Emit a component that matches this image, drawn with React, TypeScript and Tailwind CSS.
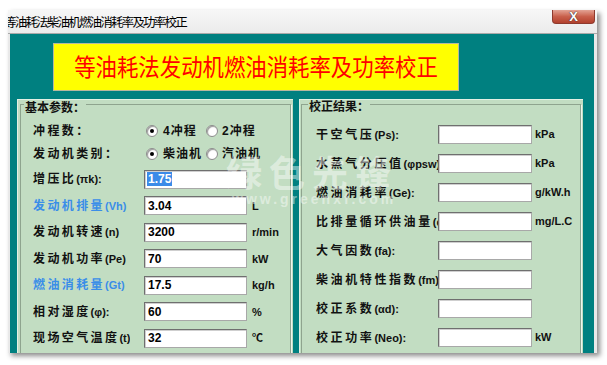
import React from "react";

const FONT = "font-['Liberation_Sans','Noto_Sans_CJK_SC',sans-serif]";

function Label({ cjk, latin, spacing }: { cjk: string; latin?: string; spacing: string }) {
  return (
    <>
      <span className={spacing}>{cjk}</span>
      {latin ? <span className="text-[11px] tracking-[0px]">{latin}</span> : null}
    </>
  );
}

function Input({ value, w, selected }: { value?: string; w: number; selected?: boolean }) {
  return (
    <div
      className="h-[19px] bg-white border border-t-[#6f6f6f] border-l-[#6f6f6f] border-b-[#a8a8a8] border-r-[#a8a8a8] shadow-[inset_1px_1px_0_#cfcfcf] flex items-center pl-[2px] text-[12px] font-bold text-black shrink-0"
      style={{ width: w }}
    >
      {value ? (
        selected ? (
          <span className="bg-[#3b8be8] text-white px-[1px] leading-[14px]">{value}</span>
        ) : (
          <span className="px-[1px]">{value}</span>
        )
      ) : null}
    </div>
  );
}

function Radio({ checked }: { checked?: boolean }) {
  return (
    <div className="w-[12px] h-[12px] rounded-full bg-white border border-[#8c8c8c] shadow-[inset_1px_1px_1px_#9a9a9a] flex items-center justify-center shrink-0">
      {checked ? <div className="w-[4px] h-[4px] rounded-full bg-black" /> : null}
    </div>
  );
}

function LeftRow({ cjk, latin, value, unit, blue, selected }: { cjk: string; latin: string; value: string; unit?: string; blue?: boolean; selected?: boolean }) {
  return (
    <div className="h-[26.5px] flex items-center">
      <div className={`w-[97px] overflow-hidden whitespace-nowrap text-[12px] font-bold ${blue ? "text-[#3a8ee8]" : "text-[#111]"}`}>
        <Label cjk={cjk} latin={latin} spacing="tracking-[2.4px]" />
      </div>
      <div className="w-[14px]" />
      <Input value={value} w={103} selected={selected} />
      <div className="pl-[5px] text-[11px] font-bold text-[#111] whitespace-nowrap">{unit}</div>
    </div>
  );
}

function RightRow({ cjk, latin, unit }: { cjk: string; latin: string; unit?: string }) {
  return (
    <div className="h-[29px] flex items-center">
      <div className="w-[122px] overflow-hidden whitespace-nowrap text-[12px] font-bold text-[#111]">
        <Label cjk={cjk} latin={latin} spacing="tracking-[2.6px]" />
      </div>
      <Input w={94} />
      <div className="pl-[3px] text-[11px] font-bold text-[#111] whitespace-nowrap">{unit}</div>
    </div>
  );
}

export default function App() {
  return (
    <div className={`relative w-[607px] h-[365px] bg-white pt-[10px] pl-[8px] overflow-hidden ${FONT}`}>
      <div className="w-[589px] h-[343px] flex flex-col bg-[#e9e9e9] shadow-[3px_3px_5px_rgba(0,0,0,0.45)]">
        {/* title bar */}
        <div className="h-[24px] flex items-start bg-gradient-to-b from-[#f7f7f7] to-[#ebebeb] border-b border-[#a9a9a9] overflow-hidden">
          <div className="flex-1 ml-[-4px] mt-[4px] text-[12.5px] tracking-[-1.8px] text-black whitespace-nowrap">
            等油耗法柴油机燃油消耗率及功率校正
          </div>
          <div className="w-[43px] h-[14px] mr-[2px] rounded-b-[4px] bg-gradient-to-b from-[#e2a395] via-[#c9604c] to-[#b2412e] border border-[#8e3a2e] border-t-0 flex items-center justify-center">
            <span className="text-white font-bold text-[13px] leading-none [text-shadow:0_0_1px_#333,0_0_1px_#333]">X</span>
          </div>
        </div>
        {/* body */}
        <div className="flex-1 ml-[2px] mr-[3px] bg-[#008080] flex flex-col pt-[9px] overflow-hidden">
          <div className="ml-[43px] w-[406px] h-[48px] bg-[#ffff00] border border-[#b8b8a0] flex items-center justify-center">
            <span className="text-[#ff0000] text-[21.4px] leading-none mt-[-2px] scale-y-[1.1] font-['Noto_Sans_CJK_SC',sans-serif]">
              等油耗法发动机燃油消耗率及功率校正
            </span>
          </div>
          <div className="flex-1 mt-[8px] pl-[7px] flex gap-[6px]">
            {/* left panel */}
            <div className="relative w-[276px] bg-[#c2ddc2] overflow-hidden border-l border-t border-[#e4f0e4]">
              <div className="absolute left-[2px] right-[2px] top-[4px] bottom-[-6px] border border-[#8ea48e] shadow-[1px_1px_0_#eef6ee]" />
              <div className="absolute left-[6px] top-[0px] px-[1px] bg-[#c2ddc2] text-[12px] font-bold text-[#111] leading-[16px]">基本参数：</div>
              <div className="relative pl-[15px] pt-[19px] flex flex-col">
                <div className="h-[23px] flex items-center">
                  <div className="w-[113px] text-[12px] font-bold tracking-[2.4px] text-[#111]">冲程数：</div>
                  <div className="w-[60px] flex items-center gap-[5px]">
                    <Radio checked />
                    <span className="text-[12px] font-bold tracking-[1px] text-[#111]">4冲程</span>
                  </div>
                  <div className="flex items-center gap-[4px]">
                    <Radio />
                    <span className="text-[12px] font-bold tracking-[1px] text-[#111]">2冲程</span>
                  </div>
                </div>
                <div className="h-[24px] flex items-center">
                  <div className="w-[113px] text-[12px] font-bold tracking-[2.4px] text-[#111]">发动机类别：</div>
                  <div className="w-[60px] flex items-center gap-[5px] whitespace-nowrap">
                    <Radio checked />
                    <span className="text-[12px] font-bold tracking-[1px] text-[#111]">柴油机</span>
                  </div>
                  <div className="flex items-center gap-[4px]">
                    <Radio />
                    <span className="text-[12px] font-bold tracking-[1px] text-[#111]">汽油机</span>
                  </div>
                </div>
                <LeftRow cjk="增压比" latin="(πk):" value="1.75" selected />
                <LeftRow cjk="发动机排量" latin="(Vh)" value="3.04" unit="L" blue />
                <LeftRow cjk="发动机转速" latin="(n)" value="3200" unit="r/min" />
                <LeftRow cjk="发动机功率" latin="(Pe)" value="70" unit="kW" />
                <LeftRow cjk="燃油消耗量" latin="(Gt)" value="17.5" unit="kg/h" blue />
                <LeftRow cjk="相对湿度" latin="(φ):" value="60" unit="%" />
                <LeftRow cjk="现场空气温度" latin="(t)" value="32" unit="℃" />
              </div>
            </div>
            {/* right panel */}
            <div className="relative w-[284px] bg-[#c2ddc2] overflow-hidden border-l border-t border-[#e4f0e4]">
              <div className="absolute left-[1px] right-[2px] top-[4px] bottom-[-6px] border border-[#8ea48e] shadow-[1px_1px_0_#eef6ee]" />
              <div className="absolute left-[8px] top-[-1px] px-[1px] bg-[#c2ddc2] text-[12px] font-bold text-[#111] leading-[16px]">校正结果：</div>
              <div className="relative pl-[16px] pt-[20px] flex flex-col">
                <RightRow cjk="干空气压" latin="(Ps):" unit="kPa" />
                <RightRow cjk="水蒸气分压值" latin="(φpsw)" unit="kPa" />
                <RightRow cjk="燃油消耗率" latin="(Ge):" unit="g/kW.h" />
                <RightRow cjk="比排量循环供油量" latin="(q)" unit="mg/L.C" />
                <RightRow cjk="大气因数" latin="(fa):" />
                <RightRow cjk="柴油机特性指数" latin="(fm)" />
                <RightRow cjk="校正系数" latin="(αd):" />
                <RightRow cjk="校正功率" latin="(Neo):" unit="kW" />
              </div>
            </div>
          </div>
        </div>
      </div>
      {/* watermark */}
      <div className="absolute left-[226px] top-[150px] pointer-events-none flex flex-col items-start">
        <div className="text-[36px] leading-[42px] font-bold tracking-[7px] text-white/45 font-['Noto_Sans_CJK_SC',sans-serif]">绿色先锋</div>
        <div className="ml-[6px] text-[14px] leading-[14px] font-bold tracking-[3px] text-white/45">www.greenxf.com</div>
      </div>
    </div>
  );
}
